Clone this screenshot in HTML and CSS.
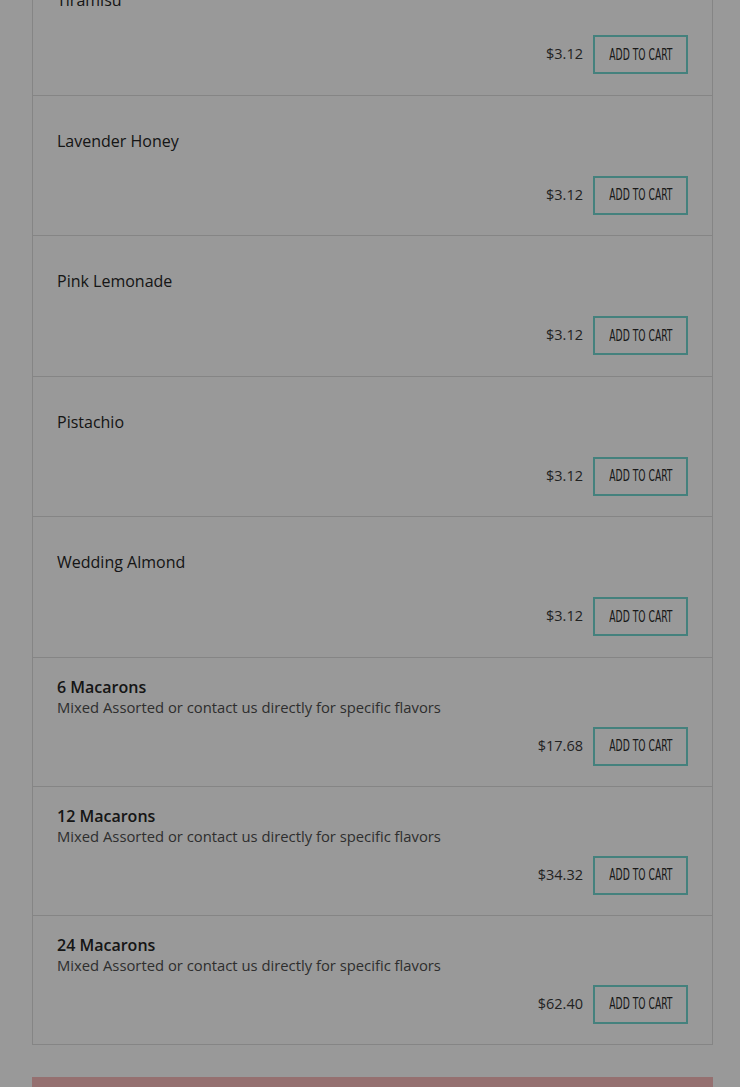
FILE: index.html
```html
<!DOCTYPE html>
<html lang="en">
<head>
<meta charset="utf-8">
<title>Macarons</title>
<link rel="stylesheet" href="styles.css">
</head>
<body>
<main class="page">
  <section class="menu">
    <div class="item item--plain">
      <div class="item-name">Tiramisu</div>
      <div class="item-buy"><span class="price">$3.12</span><button class="cart"><span>ADD TO CART</span></button></div>
    </div>
    <div class="item item--plain">
      <div class="item-name">Lavender Honey</div>
      <div class="item-buy"><span class="price">$3.12</span><button class="cart"><span>ADD TO CART</span></button></div>
    </div>
    <div class="item item--plain">
      <div class="item-name">Pink Lemonade</div>
      <div class="item-buy"><span class="price">$3.12</span><button class="cart"><span>ADD TO CART</span></button></div>
    </div>
    <div class="item item--plain">
      <div class="item-name">Pistachio</div>
      <div class="item-buy"><span class="price">$3.12</span><button class="cart"><span>ADD TO CART</span></button></div>
    </div>
    <div class="item item--plain">
      <div class="item-name">Wedding Almond</div>
      <div class="item-buy"><span class="price">$3.12</span><button class="cart"><span>ADD TO CART</span></button></div>
    </div>
    <div class="item item--box">
      <div class="item-name">6 Macarons</div>
      <div class="item-desc">Mixed Assorted or contact us directly for specific flavors</div>
      <div class="item-buy"><span class="price">$17.68</span><button class="cart"><span>ADD TO CART</span></button></div>
    </div>
    <div class="item item--box">
      <div class="item-name">12 Macarons</div>
      <div class="item-desc">Mixed Assorted or contact us directly for specific flavors</div>
      <div class="item-buy"><span class="price">$34.32</span><button class="cart"><span>ADD TO CART</span></button></div>
    </div>
    <div class="item item--box">
      <div class="item-name">24 Macarons</div>
      <div class="item-desc">Mixed Assorted or contact us directly for specific flavors</div>
      <div class="item-buy"><span class="price">$62.40</span><button class="cart"><span>ADD TO CART</span></button></div>
    </div>
  </section>
  <div class="checkout-bar"></div>
</main>
<div class="backdrop"></div>
</body>
</html>
```
FILE: styles.css
```css
html, body {
  margin: 0;
  padding: 0;
  background: #ffffff;
  overflow: hidden;
}
body {
  font-family: "Open Sans", "Liberation Sans", sans-serif;
  color: #2b2b2b;
}
.page {
  width: 681px;
  margin: -46px 0 0 32px;
}
.menu {
  border: 1px solid #dedede;
  background: #ffffff;
}
.item {
  display: flex;
  flex-direction: column;
  padding: 0 24px 20px;
  border-bottom: 1px solid #dedede;
}
.item:last-child {
  border-bottom: none;
}
.item--plain {
  padding-top: 35px;
  padding-bottom: 20.5px;
}
.item--plain .item-buy {
  margin-top: 25px;
}
.item--box {
  padding-top: 19px;
}
.item--box .item-name {
  font-weight: 600;
}
.item-name {
  font-size: 16px;
  line-height: 20px;
  color: #262626;
}
.item-desc {
  font-size: 14.8px;
  line-height: 20px;
  color: #4e4e4e;
}
.item--box .item-buy {
  margin-top: 10px;
}
.item-buy {
  display: flex;
  justify-content: flex-end;
  align-items: center;
  gap: 10px;
}
.price {
  font-size: 14.5px;
  color: #3a3a3a;
  padding-bottom: 2px;
}
.cart {
  width: 95px;
  height: 39px;
  box-sizing: border-box;
  border: 2px solid #72d8d0;
  background: #ffffff;
  padding: 0;
  display: flex;
  align-items: center;
  justify-content: center;
  font-family: "Liberation Sans Narrow", "DejaVu Sans Condensed", "Liberation Sans", sans-serif;
  font-size: 15.5px;
  color: #2a2a2a;
}
.cart span {
  display: inline-block;
  transform: scaleX(0.66);
  white-space: nowrap;
}
.checkout-bar {
  margin-top: 32px;
  height: 60px;
  background: #f9bbbb;
}
.backdrop {
  position: fixed;
  inset: 0;
  background: rgba(0, 0, 0, 0.4);
}
```
